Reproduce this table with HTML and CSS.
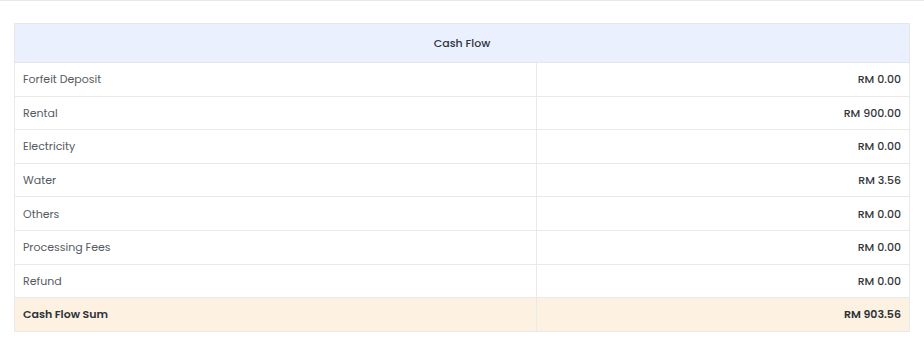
FILE: index.html
```html
<!DOCTYPE html>
<html>
<head>
<meta charset="utf-8">
<link rel="stylesheet" href="styles.css">
</head>
<body>
<div class="page">
  <table class="cash-table">
    <thead>
      <tr><th colspan="2" class="head">Cash Flow</th></tr>
    </thead>
    <tbody>
      <tr><td class="label">Forfeit Deposit</td><td class="value">RM 0.00</td></tr>
      <tr><td class="label">Rental</td><td class="value">RM 900.00</td></tr>
      <tr><td class="label">Electricity</td><td class="value">RM 0.00</td></tr>
      <tr><td class="label">Water</td><td class="value">RM 3.56</td></tr>
      <tr><td class="label">Others</td><td class="value">RM 0.00</td></tr>
      <tr><td class="label">Processing Fees</td><td class="value">RM 0.00</td></tr>
      <tr><td class="label">Refund</td><td class="value">RM 0.00</td></tr>
      <tr class="sum"><td class="label">Cash Flow Sum</td><td class="value">RM 903.56</td></tr>
    </tbody>
  </table>
</div>
</body>
</html>
```

FILE: styles.css
```css
html, body {
  margin: 0;
  padding: 0;
  background: #ffffff;
}
body {
  font-family: Poppins, Inter, "Open Sans", sans-serif;
  font-size: 11px;
  color: #555a60;
}
.page {
  border-top: 1px solid #e8e8e8;
  padding: 22px 14px;
}
.cash-table {
  width: 896px;
  border-collapse: collapse;
  border: 1px solid #e6e6e6;
}
.head {
  background: #eaf0fd;
  height: 38px;
  font-weight: 500;
  color: #30343d;
  text-align: center;
  padding: 0;
  border-bottom: 1px solid #e3e6ec;
}
.cash-table td {
  height: 31.6px;
  padding: 1px 8px 0;
  border: 1px solid #e9e9e9;
}
.label {
  width: 505px;
  text-align: left;
  color: #565b62;
}
.value {
  text-align: right;
  font-weight: 500;
  color: #33373d;
}
.sum {
  background: #fdf1e1;
}
.sum .label,
.sum .value {
  font-weight: 600;
  color: #2f3238;
}
```
